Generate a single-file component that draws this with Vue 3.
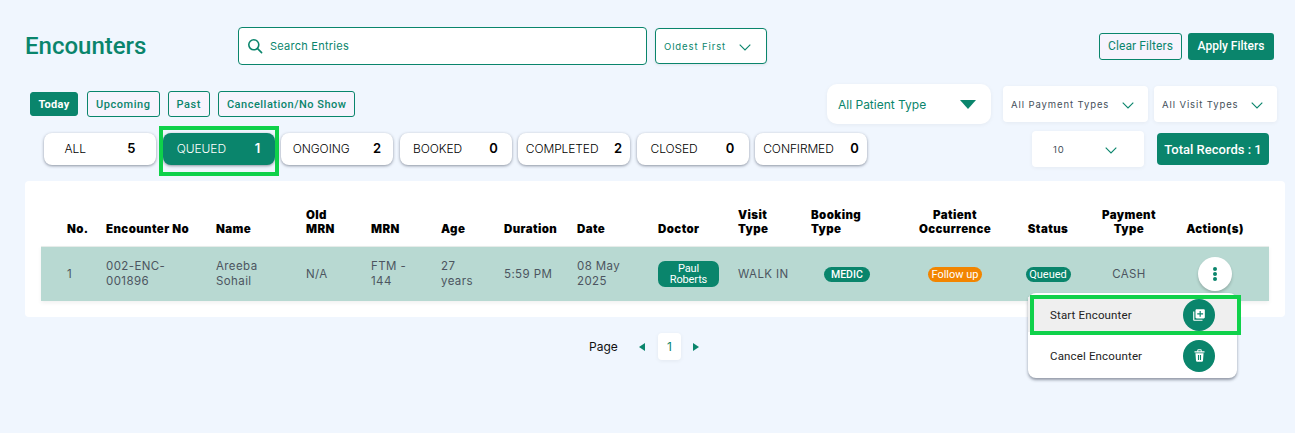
<script setup>
const dayTabs = [
  { label: 'Today', active: true },
  { label: 'Upcoming' },
  { label: 'Past' },
  { label: 'Cancellation/No Show' }
]
const statuses = [
  { label: 'ALL', n: 5 },
  { label: 'QUEUED', n: 1, active: true },
  { label: 'ONGOING', n: 2 },
  { label: 'BOOKED', n: 0 },
  { label: 'COMPLETED', n: 2 },
  { label: 'CLOSED', n: 0 },
  { label: 'CONFIRMED', n: 0 }
]
const headers = [
  { t: 'No.' }, { t: 'Encounter No' }, { t: 'Name' }, { t: 'Old MRN', w: true }, { t: 'MRN' }, { t: 'Age' },
  { t: 'Duration' }, { t: 'Date' }, { t: 'Doctor' }, { t: 'Visit Type', w: true }, { t: 'Booking Type', w: true },
  { t: 'Patient Occurrence', c: true }, { t: 'Status', c: true }, { t: 'Payment Type', c: true }, { t: 'Action(s)', c: true }
]
</script>

<template>
  <div class="page">
    <div class="top">
      <h1 class="title">Encounters</h1>
      <div class="search">
        <svg width="16" height="16" viewBox="0 0 16 16" fill="none" stroke="#0a856c" stroke-width="1.6"><circle cx="6.8" cy="6.8" r="5"/><path d="M10.6 10.6 L14.6 14.6" stroke-linecap="round"/></svg>
        <span>Search Entries</span>
      </div>
      <div class="sort">
        <span>Oldest First</span>
        <svg class="chev" width="12" height="7" viewBox="0 0 12 7" fill="none" stroke="#0a856c" stroke-width="1.1"><path d="M.7.7 6 6 11.3.7"/></svg>
      </div>
      <div class="top-actions">
        <button class="btn-outline">Clear Filters</button>
        <button class="btn-solid">Apply Filters</button>
      </div>
    </div>

    <div class="filters">
      <div class="day-tabs">
        <button v-for="d in dayTabs" :key="d.label" class="day" :class="{ on: d.active }">{{ d.label }}</button>
      </div>
      <div class="selects">
        <div class="patient">
          <span>All Patient Type</span>
          <svg width="16" height="9" viewBox="0 0 16 9"><path d="M0 0H16L8 9Z" fill="#0a856c"/></svg>
        </div>
        <div class="mini pay">
          <span>All Payment Types</span>
          <svg width="12" height="7" viewBox="0 0 12 7" fill="none" stroke="#0a856c" stroke-width="1.1"><path d="M.7.7 6 6 11.3.7"/></svg>
        </div>
        <div class="mini visit">
          <span>All Visit Types</span>
          <svg width="12" height="7" viewBox="0 0 12 7" fill="none" stroke="#0a856c" stroke-width="1.1"><path d="M.7.7 6 6 11.3.7"/></svg>
        </div>
      </div>
    </div>

    <div class="status-row">
      <div class="pills">
        <div v-for="s in statuses" :key="s.label" class="pill" :class="{ on: s.active }">
          <span class="pl">{{ s.label }}</span><b class="pn">{{ s.n }}</b>
          <i v-if="s.active" class="mark mark-pill"></i>
        </div>
      </div>
      <div class="right-tools">
        <div class="mini size">
          <span>10</span>
          <svg width="12" height="7" viewBox="0 0 12 7" fill="none" stroke="#0a856c" stroke-width="1.1"><path d="M.7.7 6 6 11.3.7"/></svg>
        </div>
        <div class="total">Total Records : 1</div>
      </div>
    </div>

    <div class="card">
      <div class="grid head">
        <div v-for="h in headers" :key="h.t" :class="{ ctr: h.c }"><span :class="{ two: h.w || h.c }">{{ h.t }}</span></div>
      </div>
      <div class="grid row">
        <div>1</div>
        <div>002-ENC-<br>001896</div>
        <div>Areeba<br>Sohail</div>
        <div>N/A</div>
        <div>FTM -<br>144</div>
        <div>27<br>years</div>
        <div>5:59 PM</div>
        <div>08 May<br>2025</div>
        <div><span class="badge doctor">Paul<br>Roberts</span></div>
        <div>WALK IN</div>
        <div class="booking"><span class="badge small medic">MEDIC</span></div>
        <div class="ctr"><span class="badge small orange">Follow up</span></div>
        <div class="ctr"><span class="badge small queued">Queued</span></div>
        <div class="ctr">CASH</div>
        <div class="ctr action">
          <span class="dots"><i></i><i></i><i></i></span>
          <div class="menu">
            <div class="item hot">
              <span>Start Encounter</span>
              <span class="ico">
                <svg width="14" height="14" viewBox="0 0 24 24" fill="#fff"><path d="M4 6H2v14c0 1.1.9 2 2 2h14v-2H4V6zm16-4H8c-1.100 0-2 .9-2 2v12c0 1.100.9 2 2 2h12c1.100 0 2-.9 2-2V4c0-1.100-.9-2-2-2zm-1 9h-4v4h-2v-4H9V9h4V5h2v4h4v2z"/></svg>
              </span>
              <i class="mark mark-item"></i>
            </div>
            <div class="item">
              <span>Cancel Encounter</span>
              <span class="ico">
                <svg width="15" height="15" viewBox="0 0 24 24" fill="#fff" fill-rule="evenodd"><path d="M8.500 5V3.500A1.500 1.500 0 0 1 10 2h4a1.500 1.500 0 0 1 1.500 1.500V5H20v2H4V5h4.500zM10 5h4V3.500h-4V5z"/><path d="M5.500 8.500h13l-.9 12a2 2 0 0 1-2 1.500H8.400a2 2 0 0 1-2-1.500l-.9-12zM9.500 11v8h1.800v-8zm3.200 0v8h1.800v-8z"/></svg>
              </span>
            </div>
          </div>
        </div>
      </div>
    </div>

    <div class="pager">
      <span class="pg">Page</span>
      <svg width="6" height="8" viewBox="0 0 6 8"><path d="M6 0V8L0 4Z" fill="#0a856c"/></svg>
      <span class="num">1</span>
      <svg width="6" height="8" viewBox="0 0 6 8"><path d="M0 0V8L6 4Z" fill="#0a856c"/></svg>
    </div>
  </div>
</template>

<style>
html, body { margin: 0; background: #f0f6fe; }
</style>

<style scoped>
.page {
  width: 1295px;
  height: 433px;
  box-sizing: border-box;
  overflow: hidden;
  padding-top: 27px;
  background: #f0f6fe;
  font-family: Inter, "Open Sans", sans-serif;
  color: #111;
}
button { font-family: Roboto, sans-serif; cursor: pointer; box-sizing: border-box; }

.top { display: flex; align-items: center; height: 38px; padding-left: 25px; padding-right: 21px; }
.title { margin: 0; width: 213px; font: 500 24px Roboto, sans-serif; color: #0a856c; }
.search {
  width: 409px; height: 38px; box-sizing: border-box; display: flex; align-items: center; gap: 7px;
  padding-left: 8px; background: #fff; border: 1px solid #0a856c; border-radius: 4px;
  font-size: 11px; color: #0a856c; letter-spacing: .25px;
}
.sort {
  margin-left: 8px; width: 112px; height: 36px; box-sizing: border-box; display: flex; align-items: center;
  justify-content: space-between; padding: 0 15px 0 8px; background: #fff; border: 1px solid #0a856c;
  border-radius: 4px; font-size: 9.500px; letter-spacing: .9px; color: #0a856c; box-shadow: 0 1px 3px rgba(0,0,0,.08);
}
.sort .chev { margin-top: 3px; }
.top-actions { margin-left: auto; display: flex; gap: 6px; }
.btn-outline, .btn-solid { height: 27px; border-radius: 3px; font-size: 12px; padding: 0; }
.btn-outline { width: 83px; border: 1px solid #0a856c; background: #f6f3fd; color: #0a856c; font-weight: 400; letter-spacing: .1px; }
.btn-solid { width: 86px; border: 0; background: #0a856c; color: #fff; font-weight: 500; }

.filters { display: flex; justify-content: space-between; align-items: center; margin-top: 19px; height: 40px; padding-left: 30px; padding-right: 18px; }
.day-tabs { display: flex; align-items: center; gap: 8px; }
.day {
  height: 26px; padding: 0 8px; border: 1px solid #0a856c; border-radius: 3px; background: #f6f3fd;
  color: #0a856c; font-size: 11px; font-weight: 500; letter-spacing: .55px;
}
.day:last-child { letter-spacing: .5px; }
.day.on { height: 24px; width: 48px; padding: 0; margin-right: 1px; background: #0a856c; color: #fff; font-weight: 700; letter-spacing: .3px; }
.selects { display: flex; align-items: center; }
.patient {
  width: 164px; height: 40px; box-sizing: border-box; display: flex; align-items: center; justify-content: space-between;
  padding: 0 15px 0 11px; background: #fff; border-radius: 10px; font-size: 12px; color: #0a856c;
  box-shadow: 0 1px 4px rgba(0,0,0,.05);
}
.mini {
  height: 36px; box-sizing: border-box; display: flex; align-items: center; justify-content: space-between;
  background: #fff; border-radius: 4px; font-size: 9.500px; letter-spacing: .9px; color: #44505a;
  box-shadow: 0 1px 4px rgba(0,0,0,.05);
}
.mini svg { margin-top: 3px; }
.pay { width: 145px; margin-left: 12px; padding: 0 14px 0 8px; }
.visit { width: 123px; margin-left: 6px; padding: 0 14px 0 8px; }

.status-row { display: flex; align-items: center; justify-content: space-between; margin-top: 7px; height: 36px; padding-left: 44px; padding-right: 26px; }
.pills { display: flex; gap: 6.500px; }
.pill {
  position: relative; width: 112px; height: 32px; box-sizing: border-box; display: flex; align-items: center; justify-content: space-around;
  padding: 0 0 2px; background: #fff; border-radius: 8px; box-shadow: 0 1px 3px rgba(40,50,70,.5); font-size: 12px; color: #000;
}
.pl { font-weight: 300; letter-spacing: -.1px; }
.pn { font-weight: 600; font-size: 13px; }
.pill.on { background: #0a856c; color: #fff; }
.mark { position: absolute; border: 4px solid #0fd14a; box-sizing: border-box; pointer-events: none; }
.mark-pill { left: -4px; right: -4px; top: -7px; bottom: -11px; }
.right-tools { display: flex; align-items: center; gap: 13px; }
.size { width: 112px; padding: 0 27px 0 21px; }
.total {
  width: 112px; height: 32px; display: flex; align-items: center; justify-content: center; border-radius: 4px;
  background: #0a856c; color: #fff; font: 500 13px Roboto, sans-serif;
}

.card { margin: 14px 10px 0 25px; height: 136px; box-sizing: border-box; padding: 0 16px; background: #fff; border-radius: 4px; }
.grid {
  display: grid; align-items: center; padding-left: 26px;
  grid-template-columns: 39px 110px 90px 65px 70px 63px 73px 81px 80px 73px 89px 110px 76px 86px 86px 11px;
}
.head { height: 65px; align-items: end; padding-bottom: 10px; box-sizing: border-box; font-size: 11.500px; font-weight: 900; line-height: 14px; color: #000; letter-spacing: .4px; }
.two { display: inline-block; width: min-content; }
.ctr { text-align: center; }
.row {
  height: 55px; background: #b8d9d2; font-size: 11.500px; line-height: 15px; color: #4c5560; letter-spacing: .4px;
  box-shadow: 0 2px 4px rgba(0,0,0,.06); border-top: 1px solid #e6ece9; box-sizing: border-box;
}
.badge { display: inline-block; background: #0a856c; color: #fff; font: 400 11px/11px Roboto, sans-serif; text-align: center; border-radius: 8px; letter-spacing: 0; }
.doctor { width: 61px; padding: 2px 0; height: 26px; box-sizing: border-box; border-radius: 7px; letter-spacing: -.15px; }
.small { height: 15px; line-height: 15px; vertical-align: middle; }
.medic { padding: 0 7px; font-size: 10.500px; font-weight: 500; }
.queued { width: 45px; }
.booking { padding-left: 13px; }
.orange { background: #f28500; width: 54px; }
.action { position: relative; }
.dots {
  width: 34px; height: 34px; margin: auto; border-radius: 50%; background: #fff; display: flex; flex-direction: column; align-items: center;
  justify-content: center; gap: 1px; box-shadow: 0 2px 3px rgba(0,0,0,.2);
}
.dots i { width: 4px; height: 4px; border-radius: 50%; background: #0a856c; }
.menu {
  position: absolute; z-index: 3; top: 36px; left: -144px; width: 209px; height: 85px; box-sizing: border-box;
  padding-top: 4px; background: #fff; border-radius: 8px; box-shadow: 0 2px 3px rgba(30,40,60,.45); text-align: left;
  font: 400 11.500px Roboto, sans-serif; color: #222; letter-spacing: .15px;
}
.item { position: relative; height: 35px; display: flex; align-items: center; justify-content: space-between; padding: 0 22px; margin-bottom: 6px; }
.item.hot { background: #efefef; }
.ico { width: 32px; height: 32px; border-radius: 50%; background: #0a856c; display: flex; align-items: center; justify-content: center; flex: none; }
.mark-item { left: 2px; width: 211px; top: -2px; height: 40px; }

.pager { display: flex; align-items: center; margin-top: 16px; height: 27px; padding-left: 589px; font-size: 12px; color: #111; }
.pg { width: 50px; }
.num { margin: 0 12px 0 13px; width: 23px; height: 27px; display: flex; align-items: center; justify-content: center; background: #fff; border-radius: 4px; color: #0a856c; box-shadow: 0 1px 4px rgba(0,0,0,.06); }
</style>
